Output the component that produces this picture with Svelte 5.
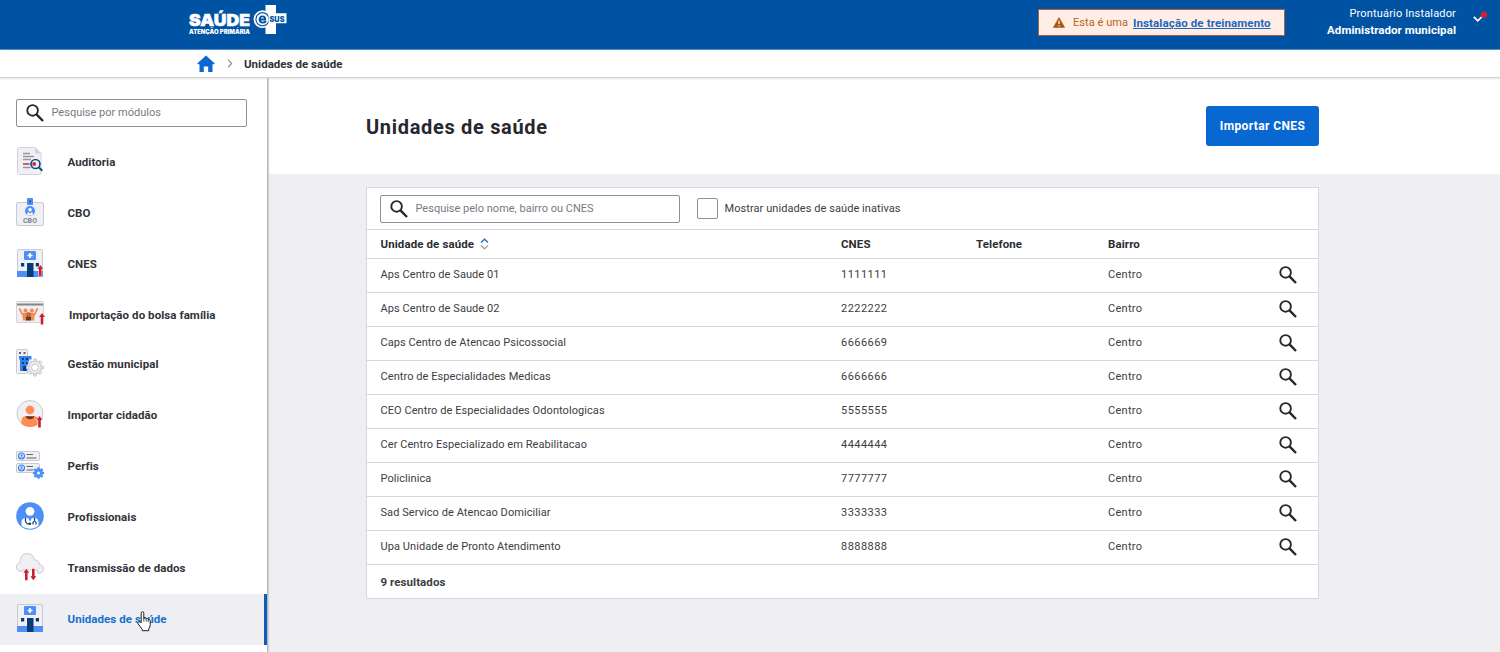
<script>
  const modules = [
    { icon: 'audit', label: 'Auditoria' },
    { icon: 'cbo', label: 'CBO' },
    { icon: 'cnes', label: 'CNES' },
    { icon: 'family', label: 'Importação do bolsa família', compact: true },
    { icon: 'city', label: 'Gestão municipal' },
    { icon: 'citizen', label: 'Importar cidadão' },
    { icon: 'profiles', label: 'Perfis' },
    { icon: 'doctor', label: 'Profissionais' },
    { icon: 'cloud', label: 'Transmissão de dados' },
    { icon: 'unit', label: 'Unidades de saúde', active: true }
  ];
  const units = [
    ['Aps Centro de Saude 01', '1111111'],
    ['Aps Centro de Saude 02', '2222222'],
    ['Caps Centro de Atencao Psicossocial', '6666669'],
    ['Centro de Especialidades Medicas', '6666666'],
    ['CEO Centro de Especialidades Odontologicas', '5555555'],
    ['Cer Centro Especializado em Reabilitacao', '4444444'],
    ['Policlinica', '7777777'],
    ['Sad Servico de Atencao Domiciliar', '3333333'],
    ['Upa Unidade de Pronto Atendimento', '8888888']
  ];
  const teeth = [0, 45, 90, 135, 180, 225, 270, 315];
</script>

{#snippet search()}
  <svg class="search" width="18" height="18" viewBox="0 0 18 18" fill="none" stroke="#27282d">
    <circle cx="6.6" cy="6.4" r="5.3" stroke-width="1.9" />
    <path d="M10.5 10.4 17 17" stroke-width="2.4" />
  </svg>
{/snippet}

{#snippet redArrow(x, y)}
  <path transform="translate({x} {y})" d="M0 0 3 4H1.3V11.5H-1.3V4H-3Z" fill="#c91f2e" stroke="#fff" stroke-width="1" paint-order="stroke" />
{/snippet}

{#snippet building()}
  <rect x="1.5" y=".5" width="25" height="27" rx="1.5" fill="#efeff4" stroke="#c9c9d1" />
  <rect x="8" y="2" width="12" height="9" rx="1" fill="#4b8ff7" />
  <path d="M14 4v5M11.5 6.5h5" stroke="#fff" stroke-width="1.7" />
  <path d="M1 22h26v6H1z" fill="#4b8ff7" />
  <path d="M5 14h3.2v3.5H5zM19.8 14H23v3.5h-3.2zM11 14h6.5v14H11z" fill="#063b78" />
{/snippet}

{#snippet moduleIcon(name)}
  <svg class="module-icon" width="28" height="28" viewBox="0 0 28 28" fill="none">
    {#if name === 'audit'}
      <path d="M2.5.5h16.5l6 6V26a1.5 1.5 0 0 1-1.500 1.500h-21A1.500 1.500 0 0 1 1.500 26V2A1.500 1.500 0 0 1 2.500.5Z" fill="#efeff4" stroke="#d2d2da" />
      <path d="M19 .5v4.500a1.500 1.500 0 0 0 1.500 1.500H25Z" fill="#d2d2da" />
      <path d="M7 6.500h7M7 9.500h11M7 12.500h8M7 20.500h8" stroke="#96969f" stroke-width="1.300" />
      <path d="M7 17h7" stroke="#c2203c" stroke-width="1.400" />
      <circle cx="19.500" cy="17" r="6" fill="#fff" />
      <circle cx="19.500" cy="17" r="4.500" fill="#eaf2fb" stroke="#174a7c" stroke-width="1.700" />
      <path d="M16.500 15.300h3.300v3.400h-3.300z" fill="#c2203c" />
      <path d="m23 20.500 3.300 3.200" stroke="#174a7c" stroke-width="2" />
    {:else if name === 'cbo'}
      <rect x=".5" y="4.500" width="27" height="23" rx="1.500" fill="#efeff4" stroke="#c9c9d1" />
      <rect x="11" y="0" width="6" height="7" rx=".8" fill="#4b8ff7" />
      <path d="M14 2.300v2.200" stroke="#174a7c" stroke-width="1.300" />
      <circle cx="14" cy="13" r="5" fill="#4b8ff7" />
      <circle cx="14" cy="11.700" r="1.800" fill="#fff" />
      <path d="M10.800 16.200c.5-2.800 5.900-2.800 6.400 0-1.500 1.800-4.900 1.800-6.400 0Z" fill="#fff" />
      <path d="m13 14.500 1 1.500 1-1.500Z" fill="#174a7c" />
      <text x="14" y="25" text-anchor="middle" textLength="14" lengthAdjust="spacingAndGlyphs" class="cbo-text">CBO</text>
    {:else if name === 'cnes'}
      {@render building()}
      {@render redArrow(24.300, 16)}
    {:else if name === 'unit'}
      {@render building()}
    {:else if name === 'family'}
      <rect x=".5" y="2.500" width="27" height="21" rx="1.500" fill="#efeff4" stroke="#d2d2da" />
      <path d="M1 5.500h26" stroke="#85858f" stroke-width="2" />
      <g stroke="#f58a52" stroke-width="1.700" stroke-linecap="round" stroke-linejoin="round">
        <path d="m3.700 10 2.500 5M21.300 10l-2.500 5" />
      </g>
      <path d="M6 14h7v7.500H7Zm13 0h-7v7.500h6Z" fill="#f58a52" />
      <circle cx="9.500" cy="11.700" r="2.100" fill="#f58a52" />
      <circle cx="15.800" cy="11.700" r="2.100" fill="#f58a52" />
      <circle cx="12.500" cy="15.200" r="1.600" fill="#f58a52" stroke="#6b341e" stroke-width=".8" />
      <path d="M10 17.500h5v4h-5z" fill="#6b341e" />
      {@render redArrow(26, 14)}
    {:else if name === 'city'}
      <rect x=".5" y=".5" width="11" height="24" rx="1" fill="#efeff4" stroke="#c9c9d1" />
      <path d="M3 3h2v2H3zM7.500 3h2v2h-2z" fill="#59606c" />
      <path d="M3 10.500V7h12.500v3.500H13V22H4V10.500Z" fill="#3482ed" />
      <path d="M6 9h2v2H6zM10 9h2v2h-2zM6 13h2v2H6zM10 13h2v2h-2zM7 17h3.500v5H7z" fill="#063b78" />
      <circle cx="19" cy="18.500" r="8" fill="#fff" />
      <g fill="#efeff4" stroke="#bfc0ca" stroke-width=".9">
        {#each teeth as a}
          <path d="M17.300 12.800 17.800 10h2.400l.5 2.800" transform="rotate({a} 19 18.500)" />
        {/each}
        <circle cx="19" cy="18.500" r="6.200" />
        <circle cx="19" cy="18.500" r="3.500" fill="#fff" />
      </g>
    {:else if name === 'citizen'}
      <circle cx="14" cy="13.500" r="13" fill="#efeff4" stroke="#c9c9d1" />
      <circle cx="14" cy="10" r="4.400" fill="#ff8d54" />
      <path d="M5.500 24v-4c0-2.500 2-3.700 4-3.700h9c2 0 4 1.200 4 3.700v4c-4.500 4-12.500 4-17 0Z" fill="#ff8d54" />
      <path d="M9.500 16.300h9c-.8 4-8.200 4-9 0Z" fill="#6b341e" />
      {@render redArrow(23.500, 16)}
    {:else if name === 'profiles'}
      <g fill="#efeff4" stroke="#c9c9d1">
        <rect x=".5" y=".5" width="23" height="9" rx="1.500" />
        <rect x=".5" y="12.500" width="23" height="9" rx="1.500" />
      </g>
      {#each [5, 17] as y}
        <circle cx="5.500" cy={y} r="3" stroke="#3482ed" stroke-width="1.100" />
        <circle cx="5.500" cy={y - .8} r="1" fill="#3482ed" />
        <path d="M3.500 {y + 2}c.5-1.500 3.500-1.500 4 0" stroke="#3482ed" />
        <path d="M10.500 {y - 1.500}h6.500M10.500 {y + 2}h10" stroke="#61616c" stroke-width="1.200" />
      {/each}
      <circle cx="22.500" cy="22" r="5.800" fill="#fff" />
      <g fill="#4b8ff7">
        {#each teeth as a}
          <path d="M21.200 18.500v-1.800c0-.6 2.600-.6 2.600 0v1.800Z" transform="rotate({a} 22.500 22)" />
        {/each}
        <circle cx="22.500" cy="22" r="4.200" />
      </g>
      <circle cx="22.500" cy="22" r="1.500" fill="#fff" />
    {:else if name === 'doctor'}
      <circle cx="14" cy="14" r="13.800" fill="#4b8ff7" />
      <circle cx="14" cy="9.300" r="4.400" fill="#fff" />
      <path d="M5.500 23.500V20c0-2.500 2-4 4-4h9c2 0 4 1.500 4 4v3.500c-4 4.200-13 4.200-17 0Z" fill="#fff" />
      <path d="M12 16h4l-2 3.500Z" fill="#4b8ff7" />
      <path d="M9.500 16v3.500q2 3.500 3.700 2M18.500 16v2.500M17 22.500v-2q1.500-3 3 0v2" stroke="#063b78" stroke-width="1.200" />
      <circle cx="14" cy="21.800" r="1.200" fill="#063b78" />
    {:else if name === 'cloud'}
      <path d="M5.500 18.500C2 18.500.5 16.500.5 14c0-2.500 1.700-4.200 3.700-4.500C4 4 6.500.5 11 .5c4.200 0 7 2.500 7.300 6.500 3.200-.3 5.200 2 5 4.500 2.700.3 4.200 2 4.200 4.300 0 2.500-1.700 4.200-4.500 4.200h-1.500V17H6v1.500Z" fill="#efeff4" stroke="#c9c9d1" />
      {@render redArrow(10.300, 15.800)}
      <path d="m17.300 27.300-3-4H16v-7.500h2.600v7.500h1.700Z" fill="#c91f2e" stroke="#fff" paint-order="stroke" />
    {/if}
  </svg>
{/snippet}

<div class="app">
  <header class="topbar">
    <svg class="logo" width="100" height="34" viewBox="0 0 100 34">
      <text class="logo-main" x="0" y="21" textLength="61" lengthAdjust="spacingAndGlyphs">SAÚDE</text>
      <text class="logo-sub" x="0" y="29" textLength="61" lengthAdjust="spacingAndGlyphs">ATENÇÃO PRIMÁRIA</text>
      <path d="M76.500 0h10.500v8.300h10.500v9.900H87V29H76.500Z" fill="#fff" />
      <circle cx="73.500" cy="14.200" r="8.900" fill="#fff" />
      <circle cx="73.500" cy="14.200" r="7.500" fill="#0052a3" stroke="#fff" stroke-width=".7" />
      <circle cx="73.500" cy="14.200" r="6" fill="#fff" />
      <path d="M70.600 14.500h5.600q0-3.200-2.700-3.200t-3 3.100q.2 3.200 3.200 3.200 2.200 0 3.300-1.500" fill="none" stroke="#0052a3" stroke-width="1.800" />
      <path d="M79.500 9h16.500v9H79.500Z" fill="#fff" />
      <text class="logo-sus" x="80.500" y="16.800" textLength="15" lengthAdjust="spacingAndGlyphs">SUS</text>
    </svg>
    <div class="notice">
      <svg width="12" height="11" viewBox="0 0 12 11"><path d="M6 .6 11.700 10.600H.3Z" fill="#ad560d" stroke="#ad560d" stroke-width=".6" stroke-linejoin="round" /><path d="M6 3.500v3.600M6 8.200v1.300" stroke="#fff" stroke-width="1.200" /></svg>
      <span class="notice-text">Esta é uma</span>
      <a class="notice-link" href="#top">Instalação de treinamento</a>
    </div>
    <div class="user">
      <span class="user-name">Prontuário Instalador</span>
      <strong class="user-role">Administrador municipal</strong>
    </div>
    <svg class="caret" width="16" height="16" viewBox="0 0 16 16"><path d="m.8 5.800 4 4 4-4" fill="none" stroke="#fff" stroke-width="1.700" /><circle cx="11" cy="3.800" r="3.200" fill="#d81e33" /></svg>
  </header>

  <nav class="crumbs">
    <svg width="18" height="18" viewBox="0 0 18 18"><path d="M9 .5 17.500 8.300q.4.700-.5.900H15.500V17h-4.300v-5.500H6.800V17H2.500V9.200H1q-.9-.2-.5-.9Z" fill="#0b67d1" /></svg>
    <svg class="sep" width="6" height="9" viewBox="0 0 6 9"><path d="m1 .7 3.700 3.800L1 8.300" fill="none" stroke="#8a8a94" stroke-width="1.100" /></svg>
    <span>Unidades de saúde</span>
  </nav>

  <div class="body">
    <aside class="sidebar">
      <label class="field side-field">
        {@render search()}
        <span>Pesquise por módulos</span>
      </label>
      <ul class="modules">
        {#each modules as m}
          <li class:active={m.active} class:compact={m.compact}>
            {@render moduleIcon(m.icon)}
            <span>{m.label}</span>
          </li>
        {/each}
      </ul>
    </aside>

    <main>
      <section class="heading">
        <h1>Unidades de saúde</h1>
        <button>Importar CNES</button>
      </section>
      <section class="card">
        <div class="toolbar">
          <label class="field table-field">
            {@render search()}
            <span>Pesquise pelo nome, bairro ou CNES</span>
          </label>
          <label class="check"><i></i><span>Mostrar unidades de saúde inativas</span></label>
        </div>
        <div class="row head">
          <span class="sortable">Unidade de saúde
            <svg width="9" height="12" viewBox="0 0 9 12" fill="none" stroke-width="1.300"><path d="m1 4.500 3.500-3.300L8 4.500" stroke="#1b6fc4" /><path d="m1 7.500 3.500 3.300L8 7.500" stroke="#a1a1aa" /></svg>
          </span>
          <span>CNES</span><span>Telefone</span><span>Bairro</span><span></span>
        </div>
        {#each units as [name, cnes]}
          <div class="row">
            <span>{name}</span><span class="code">{cnes}</span><span></span><span class="district">Centro</span>
            {@render search()}
          </div>
        {/each}
        <footer>9 resultados</footer>
      </section>
    </main>
  </div>

  <svg class="cursor" width="14" height="21" viewBox="0 0 14 21"><path d="M4.200 11.700V2.200q0-1.500 1.300-1.500t1.300 1.500v5q1.900-.8 2.400.5 1.600-.6 2 .7 1.900-.2 2 1.300v4q0 2.500-1.500 4.300v1.700H5.200v-1.300L1 12.700q-.6-1.400.6-1.800 1-.3 1.700.5Z" fill="#fff" stroke="#222" stroke-width="1" stroke-linejoin="round" /><path d="M6.800 7v3.500M9.200 7.700v3M11.200 8.500v2.500" stroke="#222" stroke-width=".8" /></svg>
</div>

<style>
  :global(body) { background: #efeef3; overflow: hidden; }
  .app { position: relative; width: 1500px; height: 652px; display: flex; flex-direction: column; overflow: hidden; font: 11px/16px Roboto, "Noto Sans", sans-serif; letter-spacing: .07px; color: #3c3d43; }
  svg { display: block; flex: none; }
  .topbar { box-sizing: border-box; height: 50px; flex: none; display: flex; background: #0052a3; border-bottom: 1px solid #5a8fc4; }
  .logo { margin: 5px 0 0 189px; overflow: visible; }
  .logo text { font-family: Inter, sans-serif; font-weight: 900; fill: #fff; letter-spacing: 0; }
  .logo-main { font-size: 16.500px; stroke: #fff; stroke-width: .5; }
  .logo-sub { font-size: 5.500px; }
  .logo .logo-sus { font-size: 7.500px; fill: #0052a3; }
  .notice { box-sizing: border-box; width: 247px; height: 27px; margin: 9px 0 0 749px; display: flex; align-items: center; padding-left: 14px; background: #ffede6; border: 1px solid #9c6548; white-space: nowrap; }
  .notice-text { margin-left: 8px; width: 60px; color: #b66420; letter-spacing: .05px; }
  .notice-link { color: #1b69bd; font-weight: 700; font-size: 11.500px; letter-spacing: .12px; }
  .user { width: 160px; margin: 6px 0 0 11px; text-align: right; color: #fff; white-space: nowrap; display: flex; flex-direction: column; }
  .user-name { letter-spacing: .16px; }
  .user-role { font-weight: 700; font-size: 11.500px; }
  .caret { margin: 11px 0 0 17px; }
  .crumbs { height: 28px; flex: none; display: flex; align-items: center; padding-left: 197px; background: #fff; font-weight: 700; font-size: 11.500px; letter-spacing: .03px; color: #2e2f35; border-bottom: 1px solid #d4d3da; box-shadow: 0 1px 2px #0000001c; box-sizing: border-box; position: relative; z-index: 2; }
  .crumbs .sep { margin: 0 11px 0 12px; }
  .body { flex: 1; display: flex; min-height: 0; }
  .sidebar { width: 267px; flex: none; box-sizing: border-box; background: #fff; box-shadow: 1px 0 2px #00000059; z-index: 1; clip-path: inset(0 -4px 0 0); padding-top: 21px; }
  .field { box-sizing: border-box; display: flex; align-items: center; height: 28px; border: 1px solid #8f8f99; border-radius: 2px; background: #fff; color: #787984; padding-left: 8.500px; gap: 8px; letter-spacing: 0; white-space: nowrap; }
  .side-field { width: 231px; margin-left: 16px; }
  .modules { list-style: none; margin: 10px 0 0; padding: 0; }
  .modules li { box-sizing: border-box; height: 51px; display: flex; align-items: center; gap: 23.500px; padding-left: 16px; font-weight: 700; font-size: 11.500px; color: #323339; white-space: nowrap; border-right: 3px solid transparent; }
  .modules li.compact { height: 49px; gap: 25px; }
  .modules span { margin-bottom: 1.500px; }
  .modules .compact span { margin-bottom: 0; }
  .module-icon { margin-bottom: 3px; overflow: visible; }
  .modules li.active { background: #efeef3; color: #1670cf; border-right-color: #0b5fb9; }
  .cbo-text { font: 700 6.500px Roboto, sans-serif; fill: #82838d; }
  main { flex: 1; background: #efeef3; min-width: 0; padding-left: 2px; }
  .heading { box-sizing: border-box; height: 96px; background: #fff; display: flex; justify-content: space-between; align-items: center; padding: 0 181px 0 97px; }
  h1 { margin: 1px 0 0; font-size: 20px; line-height: 26px; font-weight: 700; color: #27282d; letter-spacing: .68px; }
  button { width: 113px; height: 40px; padding: 0; border: 0; border-radius: 3px; background: #0867d0; color: #fff; font: 700 12px/16px Roboto, sans-serif; letter-spacing: .38px; }
  .card { box-sizing: border-box; width: 953px; margin: 13px 0 0 97px; background: #fff; border: 1px solid #d8d7de; }
  .toolbar { height: 41px; display: flex; align-items: center; padding-left: 13px; gap: 17px; }
  .table-field { width: 299.500px; }
  .check { display: flex; align-items: center; gap: 7px; }
  .check i { box-sizing: border-box; width: 21px; height: 21px; border: 1px solid #8f8f99; border-radius: 2px; }
  .row { box-sizing: border-box; height: 34px; border-top: 1px solid #d8d7de; display: grid; grid-template-columns: 460.500px 135px 132px 171px 18px; align-items: center; padding: 0 0 2px 13.500px; white-space: nowrap; }
  .row .search { margin-top: 1px; }
  .code { letter-spacing: .45px; }
  .district { letter-spacing: .28px; }
  .head { height: 29px; padding-bottom: 0; font-weight: 700; font-size: 11.500px; letter-spacing: .1px; color: #2c2d33; }
  .sortable { display: flex; align-items: center; gap: 6px; }
  footer { box-sizing: border-box; height: 34px; border-top: 1px solid #d8d7de; padding: 9px 13.500px; font-weight: 700; font-size: 11.500px; }
  .cursor { position: absolute; left: 137px; top: 611px; z-index: 2; }
</style>
